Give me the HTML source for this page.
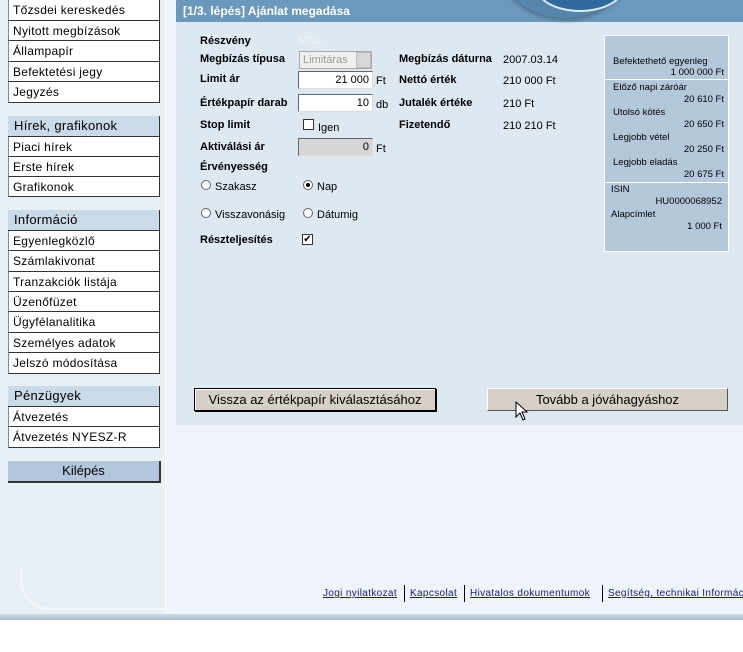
<!DOCTYPE html>
<html><head><meta charset="utf-8"><style>
*{margin:0;padding:0;box-sizing:border-box}
body{width:743px;height:652px;position:relative;overflow:hidden;background:#fff;font-family:"Liberation Sans",sans-serif;font-size:12px;color:#000}
.a{position:absolute}
.bg{left:0;top:0;width:743px;height:619px;background:#eef4f9}
.side{left:0;top:0;width:166px;height:619px;background:#e8eff5;border-right:1px solid #fff}
.mi{position:absolute;left:8px;width:152px;background:#fff;border-bottom:1px solid #333;border-right:1px solid #333;border-left:1px solid #888;padding-left:4px;line-height:20px;font-size:12px;white-space:nowrap;letter-spacing:.3px}
.mh{background:#c9dbe8;border-left:none;font-size:13px;padding-left:6px}
.main{left:176px;top:0;width:567px;height:425px;background:#dde8f1}
.hdr{left:176px;top:0;width:567px;height:22px;background:#6b99bd;color:#fff;font-weight:bold;font-size:12px;line-height:22px;padding-left:7px}
.b{font-weight:bold;font-size:11px}
.t{font-size:11px}
.inp{background:#fff;border:1px solid #666;border-right-color:#ddd;border-bottom-color:#ddd;text-align:right;padding-right:3px;font-size:11px;line-height:16px;height:18px}
.radio{width:10px;height:10px;border-radius:50%;border:1px solid #666;background:#fff}
.chk{width:11px;height:11px;border:1px solid #333;background:#fff}
.box{left:604px;top:35px;width:125px;height:217px;background:#b4c8dc;border:1px solid #fff;font-size:9.5px}
.box div{position:absolute;white-space:nowrap}
.btn{height:23px;background:#d6d0c9;border:1px solid #000;border-top-color:#fff;border-left-color:#fff;box-shadow:1px 1px 0 #000;font-size:13px;line-height:21px;text-align:center}
.ft{font-size:10px;color:#1a1a8c;text-decoration:underline;top:588px;letter-spacing:.35px;white-space:nowrap}
.sep{top:585px;width:1px;height:17px;background:#000}
</style></head><body>
<div class="a bg"></div>
<div class="a side"></div>
<div class="a" style="left:0;top:614px;width:743px;height:6px;background:linear-gradient(#d0dbe3,#a8bccb)"></div>
<div class="a" style="left:20px;top:570px;width:150px;height:40px;border-left:2px solid #f4f8fb;border-bottom:2px solid #f4f8fb;border-bottom-left-radius:30px"></div>

<div class="mi" style="top:0;height:21px">Tőzsdei kereskedés</div>
<div class="mi" style="top:21px;height:20px">Nyitott megbízások</div>
<div class="mi" style="top:41px;height:21px">Állampapír</div>
<div class="mi" style="top:62px;height:20px">Befektetési jegy</div>
<div class="mi" style="top:82px;height:21px">Jegyzés</div>
<div class="mi mh" style="top:116px;height:21px">Hírek, grafikonok</div>
<div class="mi" style="top:137px;height:20px">Piaci hírek</div>
<div class="mi" style="top:157px;height:20px">Erste hírek</div>
<div class="mi" style="top:177px;height:20px">Grafikonok</div>
<div class="mi mh" style="top:210px;height:21px">Információ</div>
<div class="mi" style="top:231px;height:20px">Egyenlegközlő</div>
<div class="mi" style="top:251px;height:21px">Számlakivonat</div>
<div class="mi" style="top:272px;height:20px">Tranzakciók listája</div>
<div class="mi" style="top:292px;height:20px">Üzenőfüzet</div>
<div class="mi" style="top:312px;height:21px">Ügyfélanalitika</div>
<div class="mi" style="top:333px;height:20px">Személyes adatok</div>
<div class="mi" style="top:353px;height:21px">Jelszó módosítása</div>
<div class="mi mh" style="top:386px;height:21px">Pénzügyek</div>
<div class="mi" style="top:407px;height:20px">Átvezetés</div>
<div class="mi" style="top:427px;height:21px">Átvezetés NYESZ-R</div>
<div class="a" style="left:8px;top:461px;width:153px;height:22px;background:#b2c7dd;border-bottom:2px solid #333;border-right:2px solid #333;font-size:13px;text-align:center;line-height:20px">Kilépés</div>

<div class="a main"></div>
<div class="a hdr">[1/3. lépés] Ajánlat megadása</div>
<div class="a" style="left:490px;top:-70px;width:150px;height:88px;border-radius:0 0 75px 75px;background:#5786ad;box-shadow:0 3px 4px rgba(0,0,0,.25)"></div>
<div class="a" style="left:535px;top:-40px;width:90px;height:52px;border-radius:50%;background:#2f6a9c;border:2px solid #dfe9f1"></div>

<div class="a b" style="left:200px;top:35px">Részvény</div>
<div class="a b" style="left:298px;top:35px;color:#e8f2f8">MOL</div>
<div class="a b" style="left:200px;top:53px">Megbízás típusa</div>
<div class="a t" style="left:299px;top:51px;width:73px;height:18px;border:1px solid #aaa;background:#f1f0ed;color:#999;line-height:16px;padding-left:3px">Limitáras</div>
<div class="a" style="left:356px;top:52px;width:15px;height:16px;background:#d8d8d8;border:1px solid #bbb"></div>
<div class="a b" style="left:200px;top:73px">Limit ár</div>
<div class="a inp" style="left:298px;top:71px;width:75px">21 000</div>
<div class="a t" style="left:376px;top:75px">Ft</div>
<div class="a b" style="left:200px;top:97px">Értékpapír darab</div>
<div class="a inp" style="left:298px;top:94px;width:75px">10</div>
<div class="a t" style="left:376px;top:99px">db</div>
<div class="a b" style="left:200px;top:119px">Stop limit</div>
<div class="a chk" style="left:303px;top:119px"></div>
<div class="a t" style="left:318px;top:122px">Igen</div>
<div class="a b" style="left:200px;top:141px">Aktiválási ár</div>
<div class="a inp" style="left:298px;top:138px;width:75px;background:#d6d6d6">0</div>
<div class="a t" style="left:376px;top:143px">Ft</div>
<div class="a b" style="left:200px;top:161px">Érvényesség</div>
<div class="a radio" style="left:201px;top:180px"></div>
<div class="a t" style="left:215px;top:181px">Szakasz</div>
<div class="a radio" style="left:303px;top:180px"><div class="a" style="left:2px;top:2px;width:4px;height:4px;border-radius:50%;background:#000"></div></div>
<div class="a t" style="left:317px;top:181px">Nap</div>
<div class="a radio" style="left:201px;top:208px"></div>
<div class="a t" style="left:215px;top:209px">Visszavonásig</div>
<div class="a radio" style="left:303px;top:208px"></div>
<div class="a t" style="left:317px;top:209px">Dátumig</div>
<div class="a b" style="left:200px;top:234px">Részteljesítés</div>
<div class="a chk" style="left:302px;top:234px;font-size:10px;line-height:9px;text-align:center">✔</div>

<div class="a b" style="left:399px;top:53px">Megbízás dáturna</div>
<div class="a t" style="left:503px;top:54px">2007.03.14</div>
<div class="a b" style="left:399px;top:74px">Nettó érték</div>
<div class="a t" style="left:503px;top:75px">210 000 Ft</div>
<div class="a b" style="left:399px;top:97px">Jutalék értéke</div>
<div class="a t" style="left:503px;top:98px">210 Ft</div>
<div class="a b" style="left:399px;top:119px">Fizetendő</div>
<div class="a t" style="left:503px;top:120px">210 210 Ft</div>

<div class="a box">
<div style="left:8px;top:20px">Befektethető egyenleg</div>
<div style="right:4px;top:31px">1 000 000 Ft</div>
<div style="left:0;top:43px;width:123px;height:1px;background:#fff"></div>
<div style="left:8px;top:46px">Előző napi záróár</div>
<div style="right:4px;top:58px">20 610 Ft</div>
<div style="left:8px;top:71px">Utolsó kötés</div>
<div style="right:4px;top:83px">20 650 Ft</div>
<div style="left:8px;top:96px">Legjobb vétel</div>
<div style="right:4px;top:108px">20 250 Ft</div>
<div style="left:8px;top:121px">Legjobb eladás</div>
<div style="right:4px;top:133px">20 675 Ft</div>
<div style="left:0;top:146px;width:123px;height:1px;background:#fff"></div>
<div style="left:6px;top:148px">ISIN</div>
<div style="right:6px;top:160px">HU0000068952</div>
<div style="left:6px;top:173px">Alapcímlet</div>
<div style="right:6px;top:185px">1 000 Ft</div>
</div>

<div class="a btn" style="left:194px;top:388px;width:242px;border-color:#000;box-shadow:inset 1px 1px 0 #fff,1px 1px 0 #000">Vissza az értékpapír kiválasztásához</div>
<div class="a btn" style="left:487px;top:388px;width:241px;border-color:#fff #555 #555 #fff;box-shadow:none">Tovább a jóváhagyáshoz</div>
<svg class="a" style="left:515px;top:401px" width="14" height="22"><path d="M1 1 L1 16 L5 12 L8 19 L10 18 L7 11 L12 11 Z" fill="#fff" stroke="#000"/></svg>

<div class="a ft" style="left:323px">Jogi nyilatkozat</div>
<div class="a sep" style="left:404px"></div>
<div class="a ft" style="left:410px">Kapcsolat</div>
<div class="a sep" style="left:464px"></div>
<div class="a ft" style="left:470px">Hivatalos dokumentumok</div>
<div class="a sep" style="left:602px"></div>
<div class="a ft" style="left:608px">Segítség, technikai Információ</div>
</body></html>
